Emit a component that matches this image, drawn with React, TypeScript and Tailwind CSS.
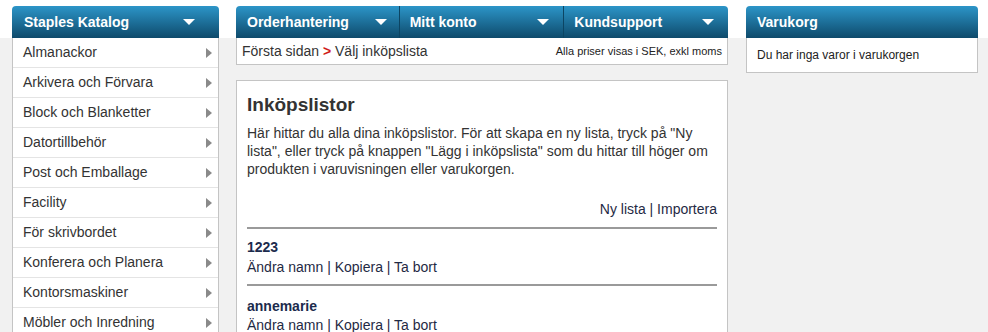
import React from "react";

const cats = [
  "Almanackor",
  "Arkivera och Förvara",
  "Block och Blanketter",
  "Datortillbehör",
  "Post och Emballage",
  "Facility",
  "För skrivbordet",
  "Konferera och Planera",
  "Kontorsmaskiner",
  "Möbler och Inredning",
];

function Down() {
  return (
    <svg width="12" height="6" viewBox="0 0 12 6" className="shrink-0">
      <path d="M0 0 L12 0 L6 6 Z" fill="#fff" />
    </svg>
  );
}

function Right() {
  return (
    <svg width="6" height="10" viewBox="0 0 6 10" className="shrink-0">
      <path d="M0 0 L6 5 L0 10 Z" fill="#8a8a8a" />
    </svg>
  );
}

const head =
  "h-[32px] bg-[linear-gradient(to_bottom,#2c95c8,#0e4a6b)] text-white font-bold text-[14px] flex items-center";

export default function App() {
  return (
    <div
      className="w-[988px] h-[332px] overflow-hidden bg-[linear-gradient(to_bottom,#ffffff_0px,#ffffff_38px,#f1f1f1_38px)] text-[#333] text-[14px]"
      style={{ fontFamily: '"Liberation Sans", Arial, sans-serif' }}
    >
      <div className="flex items-start pt-[6px] pl-[12px]">
        {/* Left */}
        <div className="w-[207px] shrink-0">
          <div className={head + " rounded-t-[4px] pl-[12px] pr-[24px] justify-between"}>
            <span>Staples Katalog</span>
            <Down />
          </div>
          <div className="bg-white border-x border-[#c4c4c4]">
            {cats.map((c) => (
              <div
                key={c}
                className="h-[30px] border-b border-[#e4e4e4] flex items-center justify-between pl-[10px] pr-[6px]"
              >
                <span>{c}</span>
                <Right />
              </div>
            ))}
          </div>
        </div>

        {/* Middle */}
        <div className="w-[492px] shrink-0 ml-[17px]">
          <div className={head + " rounded-t-[4px] overflow-hidden"}>
            <div className="flex-1 flex items-center justify-between pl-[11px] pr-[12px] h-full">
              <span>Orderhantering</span>
              <Down />
            </div>
            <div className="flex-1 flex items-center justify-between pl-[10px] pr-[14px] h-full border-l border-[#0c4563]">
              <span>Mitt konto</span>
              <Down />
            </div>
            <div className="flex-1 flex items-center justify-between pl-[10px] pr-[14px] h-full border-l border-[#0c4563]">
              <span>Kundsupport</span>
              <Down />
            </div>
          </div>
          <div className="bg-white border border-t-0 border-[#c4c4c4] h-[27px] flex items-center justify-between pl-[5px] pr-[5px]">
            <span>
              Första sidan <span className="text-[#d01a1a] font-bold">&gt;</span> Välj inköpslista
            </span>
            <span className="text-[11px] text-[#222]">Alla priser visas i SEK, exkl moms</span>
          </div>
          <div className="mt-[15px] bg-white border border-[#c4c4c4] px-[10px] pt-[12px] pb-[20px]">
            <h1 className="text-[19px] font-bold leading-[24px] text-[#333]">Inköpslistor</h1>
            <p className="mt-[7px] leading-[18px] text-[#333]">
              Här hittar du alla dina inköpslistor. För att skapa en ny lista, tryck på "Ny lista", eller tryck på knappen "Lägg i inköpslista" som du hittar till höger om produkten i varuvisningen eller varukorgen.
            </p>
            <div className="mt-[22px] text-right leading-[18px] text-[#1f2a44]">
              Ny lista | Importera
            </div>
            <div className="mt-[9px] border-t-2 border-[#9a9a9a]" />
            <div className="mt-[9px] font-bold leading-[18px] text-[#1c2b4d]">1223</div>
            <div className="mt-[2px] leading-[18px] text-[#1f2a44]">Ändra namn | Kopiera | Ta bort</div>
            <div className="mt-[8px] border-t-2 border-[#9a9a9a]" />
            <div className="mt-[11px] font-bold leading-[18px] text-[#1c2b4d]">annemarie</div>
            <div className="mt-[1px] leading-[18px] text-[#1f2a44]">Ändra namn | Kopiera | Ta bort</div>
          </div>
        </div>

        {/* Right */}
        <div className="w-[232px] shrink-0 ml-[18px]">
          <div className={head + " rounded-t-[4px] pl-[11px]"}>
            <span>Varukorg</span>
          </div>
          <div className="bg-white border border-t-0 border-[#c4c4c4] h-[35px] flex items-center pl-[10px] text-[12px] text-[#222]">
            Du har inga varor i varukorgen
          </div>
        </div>
      </div>
    </div>
  );
}
